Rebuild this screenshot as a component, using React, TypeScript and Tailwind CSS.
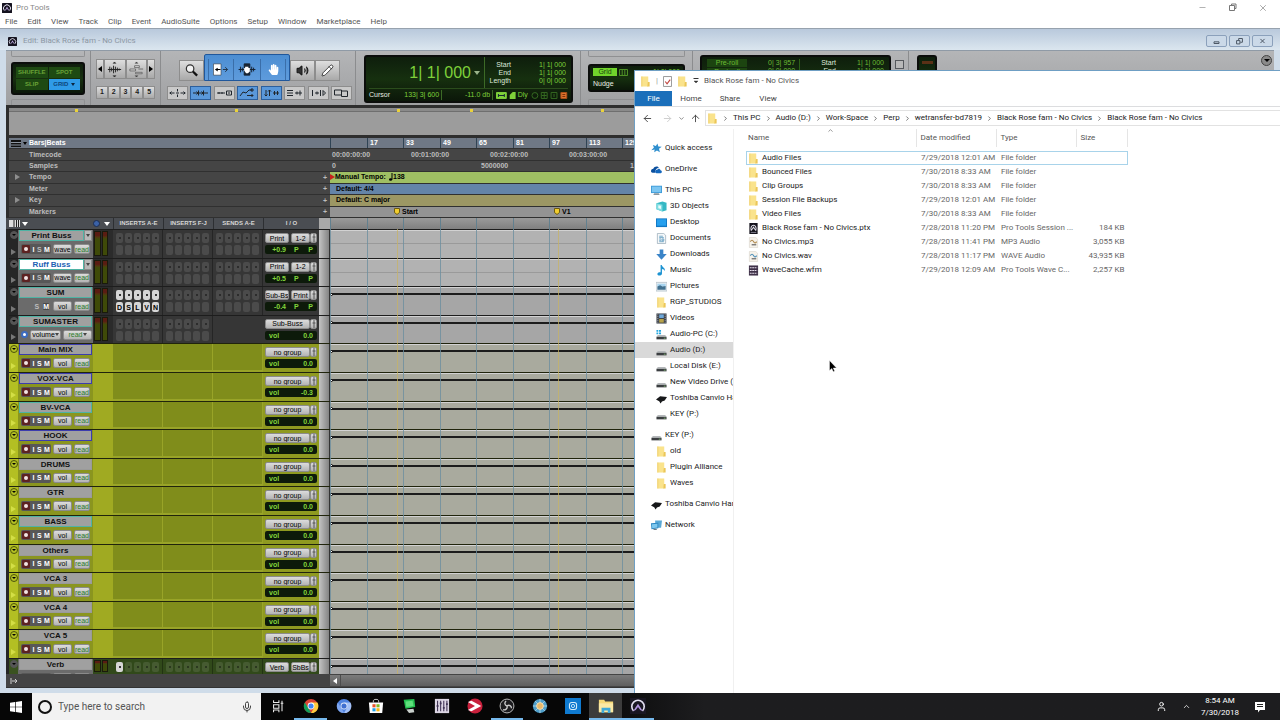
import React from 'react';
import {
  ArrowLeft,
  ArrowRight,
  ArrowUp,
  ChevronDown,
  ChevronRight,
  ChevronUp,
  Mic,
  Minus,
  Pencil,
  User,
  Volume2,
  X,
} from 'lucide-react';
import { FaHandPaper } from 'react-icons/fa';

type TrackKind = 'audio' | 'aux' | 'master' | 'vca' | 'verb';

interface Track {
  name: string;
  kind: TrackKind;
  frame: string;
  view?: string;
  outputs: string[];
  level: string;
  selected?: boolean;
}

const TEAL = 'border-[#4fb3a4]';
const BLUE = 'border-[#3c3cae]';
const GRAY = 'border-[#9a9a9a]';

const tracks: Track[] = [
  { name: 'Print Buss', kind: 'audio', frame: TEAL, view: 'wave', outputs: ['Print', '1-2'], level: '+0.9' },
  { name: 'Ruff Buss', kind: 'audio', frame: TEAL, view: 'wave', outputs: ['Print', '1-2'], level: '+0.5', selected: true },
  { name: 'SUM', kind: 'aux', frame: TEAL, view: 'vol', outputs: ['Sub-Bs', 'Print'], level: '-0.4' },
  { name: 'SUMASTER', kind: 'master', frame: TEAL, view: 'volume', outputs: ['Sub-Buss'], level: '0.0' },
  { name: 'Main MIX', kind: 'vca', frame: BLUE, view: 'vol', outputs: ['no group'], level: '0.0' },
  { name: 'VOX-VCA', kind: 'vca', frame: BLUE, view: 'vol', outputs: ['no group'], level: '-0.3' },
  { name: 'BV-VCA', kind: 'vca', frame: TEAL, view: 'vol', outputs: ['no group'], level: '0.0' },
  { name: 'HOOK', kind: 'vca', frame: BLUE, view: 'vol', outputs: ['no group'], level: '0.0' },
  { name: 'DRUMS', kind: 'vca', frame: GRAY, view: 'vol', outputs: ['no group'], level: '0.0' },
  { name: 'GTR', kind: 'vca', frame: GRAY, view: 'vol', outputs: ['no group'], level: '0.0' },
  { name: 'BASS', kind: 'vca', frame: TEAL, view: 'vol', outputs: ['no group'], level: '0.0' },
  { name: 'Others', kind: 'vca', frame: GRAY, view: 'vol', outputs: ['no group'], level: '0.0' },
  { name: 'VCA 3', kind: 'vca', frame: GRAY, view: 'vol', outputs: ['no group'], level: '0.0' },
  { name: 'VCA 4', kind: 'vca', frame: GRAY, view: 'vol', outputs: ['no group'], level: '0.0' },
  { name: 'VCA 5', kind: 'vca', frame: GRAY, view: 'vol', outputs: ['no group'], level: '0.0' },
  { name: 'Verb', kind: 'verb', frame: GRAY, outputs: ['Verb', 'SbBs'], level: '0.0' },
];

const menus = ['File', 'Edit', 'View', 'Track', 'Clip', 'Event', 'AudioSuite', 'Options', 'Setup', 'Window', 'Marketplace', 'Help'];

const bars = ['', '17', '33', '49', '65', '81', '97', '113', '129'];

const files = [
  { name: 'Audio Files', date: '7/29/2018 12:01 AM', type: 'File folder', size: '', icon: 'folder' },
  { name: 'Bounced Files', date: '7/30/2018 8:33 AM', type: 'File folder', size: '', icon: 'folder' },
  { name: 'Clip Groups', date: '7/30/2018 8:33 AM', type: 'File folder', size: '', icon: 'folder' },
  { name: 'Session File Backups', date: '7/29/2018 12:01 AM', type: 'File folder', size: '', icon: 'folder' },
  { name: 'Video Files', date: '7/30/2018 8:33 AM', type: 'File folder', size: '', icon: 'folder' },
  { name: 'Black Rose fam - No Civics.ptx', date: '7/28/2018 11:20 PM', type: 'Pro Tools Session ...', size: '184 KB', icon: 'ptx' },
  { name: 'No Civics.mp3', date: '7/28/2018 11:41 PM', type: 'MP3 Audio', size: '3,055 KB', icon: 'mp3' },
  { name: 'No Civics.wav', date: '7/28/2018 11:17 PM', type: 'WAVE Audio', size: '43,935 KB', icon: 'wav' },
  { name: 'WaveCache.wfm', date: '7/29/2018 12:09 AM', type: 'Pro Tools Wave C...', size: '2,257 KB', icon: 'wfm' },
];

const places = [
  [{ name: 'Quick access', icon: 'star' }],
  [{ name: 'OneDrive', icon: 'cloud' }],
  [
    { name: 'This PC', icon: 'pc' },
    { name: '3D Objects', icon: 'cube' },
    { name: 'Desktop', icon: 'desktop' },
    { name: 'Documents', icon: 'doc' },
    { name: 'Downloads', icon: 'down' },
    { name: 'Music', icon: 'music' },
    { name: 'Pictures', icon: 'picture' },
    { name: 'RGP_STUDIOS', icon: 'folder' },
    { name: 'Videos', icon: 'video' },
    { name: 'Audio-PC (C:)', icon: 'windrive' },
    { name: 'Audio (D:)', icon: 'drive' },
    { name: 'Local Disk (E:)', icon: 'drive' },
    { name: 'New Video Drive (F:)', icon: 'drive' },
    { name: 'Toshiba Canvio Hard', icon: 'canvio' },
    { name: 'KEY (P:)', icon: 'drive' },
  ],
  [
    { name: 'KEY (P:)', icon: 'drive' },
    { name: 'old', icon: 'folder' },
    { name: 'Plugin Alliance', icon: 'folder' },
    { name: 'Waves', icon: 'folder' },
  ],
  [{ name: 'Toshiba Canvio Hard', icon: 'canvio' }],
  [{ name: 'Network', icon: 'network' }],
];

const crumbs = ['This PC', 'Audio (D:)', 'Work-Space', 'Perp', 'wetransfer-bd7819', 'Black Rose fam - No Civics', 'Black Rose fam - No Civics'];

const FileIcon = ({ name }: { name: string }) => (
  <svg viewBox="0 0 12 12" className="size-[11px] shrink-0">
    {name === 'folder' && (
      <>
        <path d="M1.500.5h7.500v11h-7.500z" fill="#fae38c" />
        <path d="M8.500 6.500h2v5H8z" fill="#ebc658" />
        <path d="M1.500.5h1v11h-1z" fill="#efcf6a" />
      </>
    )}
    {name === 'star' && (
      <path d="M7 .5l1 3.200 3.700.3-3 2.200 1 4L6.500 8.200 3.500 10l.5-3L.3 8l2.900-3.200L2 2.300l3.300 1z" fill="#2f8fce" />
    )}
    {name === 'cloud' && (
      <>
        <path d="M0 8c0-2 1.500-2.700 2.500-2.700C3.500 2.500 7.500 2 8.500 4.300 6 4.500 4.500 6 4.500 9.500H1.700C.7 9.500 0 8.800 0 8z" fill="#0a4f9e" />
        <path d="M4.500 8.500C4.500 6.500 6 6 6.800 6.200 8 4.500 10 5.200 10.300 6.800 12.300 7 12.300 10 10.500 10H6c-1 0-1.500-.7-1.500-1.500z" fill="#1467bd" />
      </>
    )}
    {name === 'pc' && (
      <>
        <path d="M0 .8h12v8H0z" fill="#3f9bd8" />
        <path d="M1 1.800h10v6H1z" fill="#7cc6f2" />
        <path d="M3.500 9h5l1 2H2.500z" fill="#8a979f" />
      </>
    )}
    {name === 'cube' && (
      <>
        <path d="M.5 2.500L7 .5l4.500 1.500v8L7 11.500.5 9z" fill="#35b8c4" />
        <path d="M.5 2.500L7 4v7.500L.5 9z" fill="#7fdde2" />
        <path d="M2.500 4.500l3 .7v3.500l-3-.7z" fill="#e8fbfb" />
      </>
    )}
    {name === 'desktop' && (
      <>
        <path d="M0 1.500h12v9.500H0z" fill="#1278c4" />
        <path d="M1 2.500h10v7H1z" fill="#27a0ee" />
      </>
    )}
    {name === 'doc' && (
      <>
        <path d="M1.500.5h7l2 2v9h-9z" fill="#f5f8fa" stroke="#8aa0ae" strokeWidth=".7" />
        <path d="M3.500 3.500h4M3.500 5h5M3.500 6.500h2M6.500 6.500h2v2h-2zM3.500 8h2M3.500 9.500h5" stroke="#4d90b8" strokeWidth=".8" fill="none" />
      </>
    )}
    {name === 'down' && <path d="M4 .5h4v5h3.700L6 11.800.3 5.500H4z" fill="#3a84c8" />}
    {name === 'music' && (
      <path d="M5 0h1.300c.4 2.500 4 3 3.300 6.500-.6-1.500-1.700-2-3.100-2.200v5.200C6.500 12 1.500 12.300 1.500 9.700 1.500 8 4 7.600 5 8z" fill="#1c93d2" />
    )}
    {name === 'picture' && (
      <>
        <path d="M0 1.500h12v9.500H0z" fill="#e8eef2" stroke="#9aaab4" strokeWidth=".6" />
        <path d="M1.500 3h9v3h-9z" fill="#a8d4ef" />
        <path d="M1.500 6l3-1.500L7 6l3.500-.5v4h-9z" fill="#41708f" />
      </>
    )}
    {name === 'video' && (
      <>
        <path d="M.5.5h11v11H.5z" fill="#3a3f48" />
        <path d="M3.500 1.500h5v4h-5z" fill="#6ea7d8" />
        <path d="M3.500 6.500h5v4h-5z" fill="#b7a24a" />
        <path d="M2 1.500v9M10 1.500v9" stroke="#cfd4da" strokeWidth=".8" strokeDasharray="1 1" />
      </>
    )}
    {(name === 'drive' || name === 'windrive') && (
      <>
        <path d="M2 6.500h8l1.500 2H.5z" fill="#b5b8bb" />
        <path d="M.5 8.500h11v2.800H.5z" fill="#3b3e41" />
        <path d="M8.500 10h2" stroke="#8fd07c" strokeWidth=".8" />
      </>
    )}
    {name === 'windrive' && <path d="M.5 1h2v2h-2zM3.300 1h2.200v2H3.300zM.5 3.700h2v2h-2zM3.300 3.700h2.200v2H3.300z" fill="#22a7e0" />}
    {name === 'canvio' && <path d="M0 7l4.500-3.500 7.500.8-2.500 4-3 1L5 11.500 3.500 9z" fill="#17181a" />}
    {name === 'network' && (
      <>
        <path d="M4.500.5H12l-1 8H5z" fill="#5aa9d6" />
        <path d="M0 3.500l8-.5v6l-7.500 1z" fill="#2a86c2" />
        <path d="M1 4.500l6-.4v4l-5.700.8z" fill="#7ec8ee" />
        <path d="M3 9.500h3l.5 1.500h-4z" fill="#6c7d88" />
      </>
    )}
    {name === 'ptx' && (
      <>
        <path d="M1.500 0h9v12h-9z" fill="#14131c" />
        <path d="M3.500 8C2.500 5 4 2.500 6 2.500S9.500 5 8.500 8L7.300 6.500 6 4.500 4.700 6.500z" fill="none" stroke="#e6e4ee" strokeWidth="1.100" />
        <path d="M3 10.300h6" stroke="#8d8a9c" strokeWidth=".9" />
      </>
    )}
    {(name === 'mp3' || name === 'wav') && (
      <>
        <path d="M1.500.5h7l2 2v9h-9z" fill="#f6f2ea" stroke="#cfc9bd" strokeWidth=".5" />
        <path d="M2.500 5q2-3 3.500 0t3.500 0" stroke={name === 'mp3' ? '#b08a50' : '#4f8fb8'} strokeWidth="1.200" fill="none" />
        <path d="M4 8.500h5" stroke="#5c5c5c" strokeWidth="1.200" />
      </>
    )}
    {name === 'wfm' && (
      <>
        <path d="M1 .5h10v11H1z" fill="#3f3148" />
        <path d="M2 3h8M2 6h8M2 9h8" stroke="#e6dfec" strokeWidth="1.300" strokeDasharray="2 .6" />
      </>
    )}
  </svg>
);

const AvidIcon = ({ className }: { className: string }) => (
  <svg viewBox="0 0 20 20" className={className}>
    <rect width="20" height="20" rx="1" fill="#15131f" />
    <path d="M4.500 15A7 7 0 1 1 15.500 15" fill="none" stroke="#e9e6f4" strokeWidth="2" />
    <path d="M5 16L10 7l5 9-3-2-2-3-2 3z" fill="#b9a4dc" />
  </svg>
);

const WindowButtons = () => (
  <div className="flex items-center gap-[21px] pr-3 text-[#777]">
    <button aria-label="Minimize"><Minus className="size-[9px]" strokeWidth={1.500} /></button>
    <button aria-label="Restore">
      <svg viewBox="0 0 9 9" className="size-[9px]" fill="none" stroke="currentColor">
        <path d="M1.500 2.500h5v5h-5zM3.500 2.500v-1.500h4.500v4.500h-1.500" />
      </svg>
    </button>
    <button aria-label="Close"><X className="size-[10px]" strokeWidth={1.500} /></button>
  </div>
);

const EditTitleBar = () => (
  <div className="flex h-[21px] shrink-0 items-center bg-linear-to-b from-[#b9c9dc] to-[#dbe6ef] pt-[3px] pr-1 pl-2 font-['Roboto',sans-serif]">
    <AvidIcon className="size-[9px]" />
    <span className="ml-[6px] flex-1 text-[8px] leading-[12px] text-[#8c97a3]">Edit: Black Rose fam - No Civics</span>
    <div className="flex gap-[2px] pr-[3px]">
      {['M7 7h6v2H7z', 'M6.500 5.500h4v4h-4zM9 5V3h4.500v4.500H11', 'M7.500 3.500l5 5M12.500 3.500l-5 5'].map((d, i) => (
        <button key={d} aria-label={['Minimize', 'Restore', 'Close'][i]} className="rounded-[2px] border border-[#8ba0bb] bg-[#cbd9e8]">
          <svg viewBox="0 0 20 12" className="h-[10px] w-[19px]" fill="none" stroke="#4d5866" strokeWidth="1.200"><path d={d} /></svg>
        </button>
      ))}
    </div>
  </div>
);

const lcd = 'rounded-[3px] border-2 border-[#0b0d0b] bg-linear-to-b from-[#0e1e0c] via-[#16300f] to-[#0b1709]';
const keycap = 'flex items-center justify-center border border-[#8d8d8d] bg-linear-to-b from-[#dedede] to-[#a9a9a9] text-[#1b1b1b]';

const EditModes = () => (
  <div className="flex w-[85px] flex-col justify-between border-r border-[#8b8c8e] px-[5px]">
    <div className="h-[6px] rounded-b-[2px] border border-t-0 border-[#8f9092]" />
    <div className={`grid grid-cols-2 gap-px p-[3px] text-[6px] font-bold text-[#6aa338] ${lcd}`}>
      <button className="h-[11px] bg-[#1e4a12]">SHUFFLE</button>
      <button className="h-[11px] bg-[#1e4a12]">SPOT</button>
      <button className="h-[11px] bg-[#1e4a12]">SLIP</button>
      <button className="flex h-[11px] items-center justify-center gap-[3px] bg-[#2f9be8] text-[#0d4479]">GRID <i className="border-x-2 border-t-[3px] border-x-transparent border-t-[#0b2540]" /></button>
    </div>
    <div className="h-[6px] rounded-t-[2px] border border-b-0 border-[#8f9092]" />
  </div>
);

const ZoomControls = () => (
  <div className="flex w-[70px] flex-col gap-[7px] border-r border-[#8b8c8e] pt-2 pr-[5px] pl-[5px]">
    <div className="flex h-[20px]">
      <button aria-label="Zoom out" className={`w-2 ${keycap}`}><i className="border-y-[3px] border-r-4 border-y-transparent border-r-black" /></button>
      <button aria-label="Zoom audio" className={`flex-1 ${keycap}`}>
        <svg viewBox="0 0 18 18" className="size-[17px]" stroke="#222" strokeWidth="1">
          <path d="M2 9h14M4 6v6M6 7v4M8 5v8M10 6v6M12 7v4M14 8v2" /><path d="M7.500 2.500L9 1l1.500 1.500zM7.500 15.500L9 17l1.500-1.500z" fill="#222" strokeWidth=".5" />
        </svg>
      </button>
      <button aria-label="Zoom MIDI" className={`flex-1 ${keycap}`}>
        <svg viewBox="0 0 18 18" className="size-[17px]" stroke="#555" strokeWidth=".8">
          <path d="M2 8.500h6v2H2zM7 5h5v2H7zM8 12h7v1.500H8zM11 8.500h5" fill="#ddd" /><path d="M7.500 2.500L9 1l1.500 1.500zM7.500 15.500L9 17l1.500-1.500z" fill="#222" strokeWidth=".5" />
        </svg>
      </button>
      <button aria-label="Zoom in" className={`w-2 ${keycap}`}><i className="border-y-[3px] border-l-4 border-y-transparent border-l-black" /></button>
    </div>
    <div className="flex h-[13px]">
      {['1', '2', '3', '4', '5'].map((n) => (
        <button key={n} className={`flex-1 text-[7px] font-bold ${keycap}`}>{n}</button>
      ))}
    </div>
  </div>
);

const smallTools = [
  { on: false, d: 'M1.500 6h5M12.500 6h5M3.500 4.500L2 6l1.500 1.500M15.500 4.500L17 6l-1.500 1.500M9.500 2v2.500M9.500 7.500V10M8 6h3' },
  { on: true, d: 'M2 6h15M7.500 3.500v5M12.500 3.500v5M5.500 4.500L7 6 5.500 7.500M10.500 4.500L12 6l-1.500 1.500' },
  { on: false, d: 'M2 6h8M4 5v2M7 5v2M11.500 4h5v4h-5zM13 6h2' },
  { on: true, d: 'M2 9l3-4 3 1 3-3h3M9 8.500h6M13.500 7L15 8.500 13.500 10M13 2h2v2h-2z' },
  { on: true, d: 'M4 3v6M2.500 7.500L4 9l1.500-1.500M7.500 9V3M6 4.500L7.500 3 9 4.500M11 6h6M12.500 4v4M15.500 4v4' },
  { on: false, d: 'M2 3.500h6M2 6h6M2 8.500h6M10 6h7M12 4.500v3M15 3.500v5' },
  { on: false, d: 'M3.500 3v6M6 6h4M8 4.500v3M11.500 3v6M14 3.500L16.500 6 14 8.500z' },
  { on: false, d: 'M2.500 3h7v5h-7zM9.500 4h6v5.500h-6z' },
];

const EditTools = () => (
  <div className="flex w-[195px] flex-col justify-between border-r border-[#8b8c8e] pt-[3px] pr-[3px] pb-[5px] pl-[6px]">
    <div className="flex h-[27px] items-end pl-3">
      <button aria-label="Zoomer" className={`h-[21px] w-[25px] ${keycap}`}>
        <svg viewBox="0 0 16 16" className="size-[15px]"><circle cx="6.500" cy="6" r="4" fill="#f2f2f2" stroke="#333" strokeWidth="1.300" /><path d="M9.500 9l4.500 4.500" stroke="#111" strokeWidth="2.400" /></svg>
      </button>
      <div className="flex h-[27px] items-end rounded-t-[2px] border border-[#20579b] bg-linear-to-b from-[#4c8ed2] to-[#5e9bdc] px-[3px]">
        <button aria-label="Trim" className="flex h-[21px] w-[26px] items-center justify-center border-x border-[#3a6ea9]">
          <svg viewBox="0 0 20 16" className="h-[15px] w-[20px]"><path d="M2 2h8v12H2z" fill="#fff" stroke="#333" strokeWidth=".6" /><path d="M3.500 8l3-2v4zM6.500 7.500h3v1h-3z" fill="#000" /><path d="M12 8h5M14.500 5.500L17 8l-2.500 2.500" stroke="#234" fill="none" /></svg>
        </button>
        <button aria-label="Selector" className="flex h-[21px] w-[26px] items-center justify-center">
          <svg viewBox="0 0 20 16" className="h-[15px] w-[20px]" stroke="#14202e"><path d="M1 8h18M3 5v6M5 6v4M15 5v6M17 6v4" /><path d="M7 2h6v12H7z" fill="#1b2633" /><path d="M7 9V6.500h1V5h3.500v1.500H13V10l-2 2H9z" fill="#fff" stroke="none" /></svg>
        </button>
        <button aria-label="Grabber" className="flex h-[21px] w-[26px] items-center justify-center border-x border-[#3a6ea9]"><FaHandPaper className="size-[11px] text-white" /></button>
      </div>
      <button aria-label="Scrubber" className={`h-[21px] w-[25px] ${keycap}`}><Volume2 className="size-[13px] fill-[#333]" /></button>
      <button aria-label="Pencil" className={`h-[21px] w-[25px] ${keycap}`}><Pencil className="size-[13px] fill-white" strokeWidth={1.500} /></button>
    </div>
    <div className="flex justify-between">
      {smallTools.map((t) => (
        <button
          key={t.d}
          aria-label="Edit option"
          className={`flex h-[14px] w-[21px] items-center justify-center border ${t.on ? 'border-[#2c5f9c] bg-[#5a98da]' : 'border-[#8d8d8d] bg-[#c9c9c9]'}`}
        >
          <svg viewBox="0 0 19 12" className="h-3 w-[19px]" fill="none" stroke="#20262c"><path d={t.d} /></svg>
        </button>
      ))}
    </div>
  </div>
);

const Counter = () => (
  <div className="w-[225px] border-r border-[#8b8c8e] pt-1 pr-[7px] pl-2">
    <div className={`flex h-[48px] flex-col px-[3px] text-[#7fd13a] ${lcd}`}>
      <div className="flex flex-1 items-center border-b border-[#2b4d1c]">
        <div className="flex h-full w-[116px] items-center justify-end gap-[3px] border-r border-[#3c6a26] pr-1">
          <span className="text-[16px] leading-4">1| 1| 000</span>
          <i className="border-x-[3px] border-t-4 border-x-transparent border-t-[#9ab48a]" />
        </div>
        <div className="flex flex-1 justify-between pr-[2px] pl-[2px] text-[7px] leading-[8px]">
          <div className="w-[24px] text-right text-[#dfe8da]">
            <div>Start</div>
            <div>End</div>
            <div>Length</div>
          </div>
          <div className="text-right">
            <div>1| 1| 000</div>
            <div>1| 1| 000</div>
            <div>0| 0| 000</div>
          </div>
        </div>
      </div>
      <div className="flex h-[12px] items-center text-[7px] whitespace-nowrap">
        <span className="w-[36px] text-[#e8efe4]">Cursor</span>
        <span className="w-[38px] border-r border-[#3c6a26] pr-[2px] text-right">133| 3| 600</span>
        <span className="w-[52px] border-r border-[#3c6a26] pr-[2px] text-right">-11.0 db</span>
        <svg viewBox="0 0 22 9" className="ml-[3px] h-[9px] w-[22px]" fill="none" stroke="#7fd13a">
          <path d="M.5 1.500h10v6H.5z" fill="#7fd13a" /><path d="M2.500 4.500h6M2.500 3v3M8.500 3v3" stroke="#123" />
          <path d="M14 4l3-3h3v7h-6z" fill="#7fd13a" stroke="none" />
        </svg>
        <span>Dly</span>
        <svg viewBox="0 0 38 9" className="ml-[3px] h-[9px] w-[38px]" fill="none" stroke="#356b22">
          <circle cx="4" cy="4.500" r="3" />
          <path d="M10.500 1.500h6v6h-6zM20.500 1.500h6v6h-6zM11 4.500h5M13.500 2v5M23.500 3v3" />
          <path d="M30.500 1.500h6v6h-6z" fill="#e0762e" stroke="#a8501a" />
          <path d="M32 3.500h3M32 5.500h3" stroke="#7a2f0a" />
        </svg>
      </div>
    </div>
  </div>
);

const Toolbar = () => (
  <div className="flex h-[55px] shrink-0 border-t border-[#8f9aa6] bg-linear-to-b from-[#b4b5b7] to-[#9fa0a2]">
    <EditModes />
    <ZoomControls />
    <EditTools />
    <Counter />
    <div className="flex w-[112px] flex-col justify-between border-r border-[#8b8c8e] px-[7px]">
      <div className="h-[6px] rounded-b-[2px] border border-t-0 border-[#8f9092]" />
      <div className={`flex flex-col gap-[4px] px-[3px] py-[2px] text-[7px] leading-[8px] text-[#7fd13a] ${lcd}`}>
        <div className="flex items-center gap-[2px]">
          <button className="w-[24px] bg-[#71d52b] text-[#17430b]">Grid</button>
          <svg viewBox="0 0 10 8" className="h-[7px] w-[9px]" fill="none" stroke="#5aa32c"><path d="M.5.5h9v7h-9zM3.500 1v6M6.500 1v6" /></svg>
          <span className="ml-auto">1| 0| 000</span>
        </div>
        <div className="flex text-[#e8efe4]">Nudge</div>
      </div>
      <div className="h-[6px] rounded-t-[2px] border border-b-0 border-[#8f9092]" />
    </div>
    <div className="flex w-[216px] items-start gap-1 border-r border-[#8b8c8e] pt-1 pl-[7px]">
      <div className={`flex h-[48px] flex-1 justify-between px-[5px] pt-[2px] text-[7px] leading-[8px] text-[#6dbb34] ${lcd}`}>
        <div className="w-[40px] text-center">
          <div className="bg-[#1c4410]">Pre-roll</div>
          <div className="mt-px bg-[#1c4410]">Post-roll</div>
        </div>
        <div className="border-r border-[#2d6018] pr-1"><div>0| 3| 957</div><div>0| 0| 000</div></div>
        <div className="text-right text-[#dfe8da]"><div>Start</div><div>End</div></div>
        <div><div>1| 1| 000</div><div>1| 1| 000</div></div>
      </div>
      <button aria-label="Link" className="mt-[5px] mr-1 size-[9px] border border-[#55585c] bg-[#b8b8b8]" />
    </div>
    <div className="pt-1 pl-2">
      <div className={`flex h-[44px] w-[20px] justify-center pt-1 ${lcd}`}><div className="h-[3px] w-[11px] bg-[#5a3016]" /></div>
    </div>
    <button aria-label="Toolbar menu" className="mt-1 mr-[2px] ml-auto flex size-[11px] items-center justify-center rounded-full border border-[#444] bg-[#8a8a8a]">
      <i className="border-x-[3px] border-t-[3px] border-x-transparent border-t-black" />
    </button>
  </div>
);

// bar cells alternate between 37 and 36 px so that sixteen bars stay 36.5 px apart
const cellWidth = (i: number) => (i % 2 ? 'w-9' : 'w-[37px]');

const Overview = () => (
  <div className="h-[33px] shrink-0 bg-[#2e2e2e] py-[3px] pl-[3px]">
    <div className="relative h-full rounded-tl-[2px] bg-[#9c9c9c]">
      <div className="h-[4px] border-b border-[#6f6f6f] bg-[#8a8a8a]" />
      {[67, 227, 389, 462, 593].map((x) => (
        <i key={x} className="absolute top-px size-[3px] bg-[#ead23a]" style={{ left: x - 1 }} />
      ))}
    </div>
  </div>
);

const MarkerFlag = ({ label }: { label: string }) => (
  <span className="flex items-center gap-[2px]">
    <svg viewBox="0 0 6 7" className="h-[7px] w-[6px]"><path d="M.5.5h5v4L3 6.500.5 4.500z" fill="#f2cd2e" stroke="#6d5c12" /></svg>
    {label}
  </span>
);

const Rulers = () => {
  const rows = [
    { name: 'Bars|Beats', tone: 'bg-[#6f7885] text-white', arrow: false, plus: false },
    { name: 'Timecode', tone: 'bg-[#454545] text-[#bdbdbd]', arrow: false, plus: false },
    { name: 'Samples', tone: 'bg-[#454545] text-[#bdbdbd]', arrow: false, plus: false },
    { name: 'Tempo', tone: 'bg-[#9fbf63] text-black', arrow: true, plus: true },
    { name: 'Meter', tone: 'bg-[#6484a8] text-black', arrow: false, plus: true },
    { name: 'Key', tone: 'bg-[#9c9764] text-black', arrow: true, plus: true },
    { name: 'Markers', tone: 'bg-[#939393] text-black', arrow: false, plus: true },
  ];
  return (
    <div className="grid h-[80px] shrink-0 grid-rows-7 bg-[#2e2e2e] pl-[3px] text-[7px] leading-[10px] font-bold">
      {rows.map((row, i) => (
        <div key={row.name} className="flex min-h-0 items-stretch overflow-hidden border-b border-[#303030]">
          <div className={`flex w-[321px] shrink-0 items-center pr-[3px] ${i === 0 ? 'bg-[#6f7885] text-white' : 'bg-[#454545] text-[#bdbdbd]'}`}>
            <span className="flex w-[20px] items-center gap-[2px] pl-[2px]">
              {i === 0 && (
                <>
                  <svg viewBox="0 0 10 7" className="h-[7px] w-[10px]"><path d="M0 0h10v7H0z" fill="#111" /><path d="M0 2.500h10M0 5h10" stroke="#8c95a1" /></svg>
                  <i className="border-x-2 border-t-[3px] border-x-transparent border-t-black" />
                </>
              )}
              {row.arrow && <i className="ml-1 border-y-[3px] border-l-[5px] border-y-transparent border-l-[#8e8e8e]" />}
            </span>
            <span className="flex-1">{row.name}</span>
            {row.plus && <button aria-label={`Add ${row.name}`} className="leading-none">+</button>}
          </div>
          <div className={`flex flex-1 items-center overflow-hidden whitespace-nowrap ${row.tone}`}>
            {i === 0 && bars.map((b, n) => (
              <span key={n} className={`h-full shrink-0 border-l border-[#2f4354] pl-[2px] ${cellWidth(n)}`}>{b}</span>
            ))}
            {i === 1 && ['00:00:00:00', '00:01:00:00', '00:02:00:00', '00:03:00:00'].map((t) => (
              <span key={t} className="w-[79px] shrink-0 pl-[2px]">{t}</span>
            ))}
            {i === 2 && (
              <>
                <span className="w-[151px] shrink-0 pl-[2px]">0</span>
                <span className="w-[149px] shrink-0">5000000</span>
                <span>10000000</span>
              </>
            )}
            {i === 3 && (
              <>
                <i className="border-y-[3px] border-l-[5px] border-y-transparent border-l-[#c8231c]" />
                <span className="w-[54px]">Manual Tempo:</span>
                <svg viewBox="0 0 4 8" className="h-2 w-1"><ellipse cx="1.600" cy="6.500" rx="1.600" ry="1.300" /><path d="M2.500 0h1v6.500h-1z" /></svg>
                <span>138</span>
              </>
            )}
            {i === 4 && <span className="pl-[6px]">Default: 4/4</span>}
            {i === 5 && <span className="pl-[6px]">Default: C major</span>}
            {i === 6 && (
              <>
                <span className="w-[161px] shrink-0 pl-[64px]"><MarkerFlag label="Start" /></span>
                <span className="pl-[63px]"><MarkerFlag label="V1" /></span>
              </>
            )}
          </div>
        </div>
      ))}
    </div>
  );
};

const Slots = ({ letters, tone, lit = 0, dim }: { letters?: string; tone: string; lit?: number; dim?: boolean }) => (
  <div className={`grid w-[50px] shrink-0 grid-cols-5 content-start gap-x-[2px] gap-y-[2px] border-r border-black/30 px-[3px] pt-[3px] ${tone}`}>
    {Array.from({ length: 10 }, (_, i) => {
      const on = i % 5 < lit;
      return (
        <span
          key={i}
          className={`flex h-[10px] items-center justify-center rounded-[2px] text-[7px] leading-none font-bold ${on ? 'bg-[#d6d6d6] text-black' : dim ? 'bg-white/10 text-black/50' : 'bg-[#4b4b4b] text-[#222]'}`}
        >
          {i < 5 ? <i className="size-[2px] rounded-full bg-current" /> : on && letters ? letters[i - 5] : ''}
        </span>
      );
    })}
  </div>
);

const btn = 'flex h-[10px] items-center justify-center rounded-[2px] border border-[#8b8b8b] bg-linear-to-b from-[#dcdcdc] to-[#b4b4b4] text-[7px] leading-none text-black';

const TrackRow = ({ track }: { track: Track }) => {
  const vca = track.kind === 'vca';
  const verb = track.kind === 'verb';
  const aux = track.kind === 'aux';
  const cell = vca ? 'bg-[#808d1b]' : verb ? 'bg-[#31491a]' : 'bg-[#363636]';
  const strip = vca ? 'bg-[#b3bf23]' : verb ? 'bg-[#3a5220]' : 'bg-[#262626]';
  const hasLine = track.kind !== 'audio';

  return (
    <div className={`flex min-h-0 overflow-hidden border-t ${vca ? 'border-[#20240c]' : 'border-[#1d1d1d]'}`}>
      <div className={`flex w-[9px] shrink-0 flex-col items-center justify-between pt-px pb-[3px] ${strip}`}>
        <span className={`flex size-[8px] items-center justify-center rounded-full border ${vca ? 'border-[#4b520c]' : 'border-[#555] bg-[#555]'}`}>
          <i className="border-x-2 border-t-2 border-x-transparent border-t-black" />
        </span>
        {!verb && <i className={`border-y-[3px] border-l-[5px] border-y-transparent ${vca ? 'border-l-[#d3de45]' : 'border-l-[#777]'}`} />}
      </div>
      <div className={`flex w-[75px] shrink-0 flex-col gap-[3px] pr-px pl-px ${vca ? 'bg-[#8a951f]' : 'bg-[#6b6b6b]'}`}>
        <div className="flex">
          <button
            className={`h-[11px] flex-1 border text-[8px] leading-[9px] font-bold ${track.frame} ${track.selected ? 'bg-white text-[#2261b4]' : 'bg-[#a0a0a0] text-[#111]'}`}
          >
            {track.name}
          </button>
          {track.kind === 'audio' && (
            <button aria-label="Playlist" className="flex w-[8px] items-center justify-center border border-[#8b8b8b] bg-[#b8b8b8]">
              <i className="border-x-2 border-t-[3px] border-x-transparent border-t-[#444]" />
            </button>
          )}
        </div>
        <div className="flex items-center gap-[2px] pl-[2px]">
          {track.kind === 'master' && (
            <>
              <span className="size-[7px] rounded-full border-2 border-[#3d6cc0] bg-white" />
              <button className={`w-[31px] justify-between px-px ${btn}`}><span>volume</span><i className="border-x-2 border-t-[3px] border-x-transparent border-t-[#444]" /></button>
              <button className={`flex-1 justify-around ${btn}`}><span className="text-[#2c7d2c]">read</span><i className="border-x-2 border-t-[3px] border-x-transparent border-t-[#444]" /></button>
            </>
          )}
          {verb && (
            <>
              <i className="h-[10px] w-[30px] rounded-[2px] bg-[#575757]" />
              <i className={`w-[19px] ${btn}`} />
              <i className={`w-4 ${btn}`} />
            </>
          )}
          {!verb && track.kind !== 'master' && (
            <>
              <div className={`flex h-[10px] w-[30px] items-center rounded-[2px] text-[7px] leading-none font-bold text-white ${aux ? 'justify-end gap-1 pr-[2px]' : 'justify-around bg-[#575757]'}`}>
                {!aux && (
                  <>
                    <i className="flex size-[8px] items-center justify-center rounded-[1px] bg-[#5d2222]"><i className="size-1 rounded-full bg-[#f1e4e4]" /></i>
                    <button>I</button>
                  </>
                )}
                <button className={vca ? '' : 'text-[#bdbdbd]'}>S</button>
                <button className={aux ? 'rounded-[1px] bg-[#4a4a4a]' : ''}>M</button>
              </div>
              <button className={`w-[19px] ${btn}`}>{track.view}</button>
              <button className={`w-4 ${btn}`}><span className="text-[#2c7d2c]">read</span></button>
            </>
          )}
        </div>
      </div>
      <div className={`flex w-[20px] shrink-0 gap-px pt-px pr-[5px] pb-[2px] pl-px ${vca ? 'bg-[#a0aa22]' : verb ? 'bg-[#31491a]' : 'bg-[#2b2b2b]'}`}>
        {!vca && [0, 1].map((n) => (
          <i key={n} className="flex-1 border border-[#1a1a0c] bg-linear-to-b from-[#5a1c12] from-15% to-[#3f4a08] to-30%" />
        ))}
      </div>
      {vca
        ? [0, 1, 2].map((n) => <div key={n} className={`w-[50px] shrink-0 border-r border-b-2 border-[#99a428] ${cell}`} />)
        : (
          <>
            <Slots tone={cell} letters="DSLVN" lit={aux ? 5 : verb ? 1 : 0} dim={verb} />
            <Slots tone={cell} dim={verb} />
            {track.kind === 'master' ? <div className={`w-[50px] shrink-0 ${cell}`} /> : <Slots tone={cell} dim={verb} />}
          </>
        )}
      <div className={`flex w-[56px] shrink-0 flex-col gap-[2px] px-[2px] pt-[3px] ${vca ? 'bg-[#8f9a20]' : cell}`}>
        <div className="flex">
          {track.outputs.map((o, n) => (
            <button key={n} className={`overflow-hidden whitespace-nowrap ${n ? 'ml-[2px] flex-1' : track.outputs.length === 2 ? 'w-[24px]' : 'flex-1'} ${btn}`}>{o}</button>
          ))}
          <button aria-label="Output window" className={`w-[7px] ${btn}`}>
            <svg viewBox="0 0 4 8" className="h-2 w-1" stroke="#555" fill="none"><path d="M2 0v8M.5 3h3" /></svg>
          </button>
        </div>
        {!verb && (
          <div className="flex h-[9px] items-center rounded-[2px] bg-[#0d1a0a] px-1 text-[7px] leading-none font-bold text-[#83d63c]">
            {track.outputs.length === 2 ? (
              <>
                <span className="w-[17px] text-right">{track.level}</span>
                <span className="ml-2 flex-1">P</span>
                <span>P</span>
              </>
            ) : (
              <>
                <span className="flex-1">vol</span>
                <span>{track.level}</span>
              </>
            )}
          </div>
        )}
      </div>
      <div className="w-[11px] shrink-0 border-r border-[#333] bg-linear-to-r from-[#c4c4c4] to-[#848484]" />
      <div className={`min-w-0 flex-1 border-t border-[#d2d2d2] ${vca ? 'bg-[#a9aa9e]' : hasLine ? 'bg-[#a6a6a6]' : 'bg-[#b2b2b2]'}`}>
        {hasLine
          ? <div className="mt-[5px] flex h-[2px] items-center bg-[#1c1c1c]"><i className="size-[3px] rounded-full border border-black bg-white" /></div>
          : <div className="mt-3 border-t border-[#9a9a9a]" />}
      </div>
    </div>
  );
};

const TrackArea = () => (
  <>
    <div className="flex h-[11px] shrink-0 bg-[#4a4d52] pl-[3px] text-[6px] leading-[11px] font-bold text-[#d6d6d6]">
      <div className="flex w-[104px] shrink-0 items-center gap-[2px] pr-[3px]">
        <svg viewBox="0 0 11 7" className="h-[7px] w-[11px]"><path d="M0 0h11v7H0z" fill="#ddd" /><path d="M5 0v7M7.500 0v7M9.500 0v7" stroke="#222" /></svg>
        <i className="border-x-[3px] border-t-4 border-x-transparent border-t-white" />
        <i className="ml-auto size-[7px] rounded-full border border-[#1c2d52] bg-[#3b62a8]" />
        <i className="ml-[2px] border-x-[3px] border-t-4 border-x-transparent border-t-white" />
      </div>
      {['INSERTS A-E', 'INSERTS F-J', 'SENDS A-E'].map((h) => (
        <span key={h} className="w-[50px] shrink-0 border-l border-[#2d2f32] text-center whitespace-nowrap">{h}</span>
      ))}
      <span className="w-[56px] shrink-0 border-l border-[#2d2f32] text-center">I / O</span>
      <div className="w-[11px] shrink-0 bg-[#a9a9a9]" />
      <div className="flex flex-1 overflow-hidden bg-linear-to-b from-[#9a9a9a] to-[#808080]">
        {bars.map((b, n) => <i key={n} className={`shrink-0 border-l border-[#62808f] ${cellWidth(n)}`} />)}
      </div>
    </div>
    <div className="relative min-h-0 flex-1 overflow-hidden bg-[#262626] pl-[3px]">
      <div className="grid h-full grid-rows-[repeat(15,minmax(0,1fr))_16px]">
        {tracks.map((t) => <TrackRow key={t.name} track={t} />)}
      </div>
      {/* bar lines and marker lines lie over every lane */}
      <div className="pointer-events-none absolute inset-y-0 right-0 left-[324px] flex overflow-hidden">
        {bars.map((b, n) => <i key={n} className={`shrink-0 border-l border-[#6d8f9f]/80 ${cellWidth(n)}`} />)}
        <i className="absolute inset-y-0 left-[67px] w-px bg-[#c9b463]/70" />
        <i className="absolute inset-y-0 left-[228px] w-px bg-[#c9b463]/70" />
      </div>
    </div>
    <div className="flex h-[13px] shrink-0 items-center bg-[#444] pl-1">
      <svg viewBox="0 0 8 8" className="h-2 w-[320px] shrink-0" preserveAspectRatio="xMinYMid" fill="none" stroke="#d0d0d0"><path d="M1 1v6M2 4h5M5 2l2 2-2 2" /></svg>
      <div className="flex h-[11px] flex-1 bg-linear-to-b from-[#7b7b7b] to-[#5f5f5f]">
        <button aria-label="Scroll left" className="flex w-[11px] items-center justify-center border-r border-[#4d4d4d]"><i className="border-y-[3px] border-r-4 border-y-transparent border-r-white" /></button>
      </div>
    </div>
  </>
);

const Explorer = () => (
  <section className="absolute top-[41px] right-0 bottom-0 left-[634px] flex flex-col overflow-hidden border-t border-l border-[#6f9fc4] bg-white font-['Roboto',sans-serif] text-[8px] leading-[14px] text-[#444]">
    <div className="flex h-5 shrink-0 items-center gap-[5px] pl-[5px]">
      <FileIcon name="folder" />
      <span className="text-[#999]">|</span>
      <svg viewBox="0 0 10 12" className="h-[11px] w-[9px]" fill="none"><path d="M.5.500h9v11h-9z" stroke="#8d8d8d" /><path d="M2.500 6l2 2.500L8 4" stroke="#c0453f" strokeWidth="1.300" /></svg>
      <FileIcon name="folder" />
      <svg viewBox="0 0 6 6" className="size-[6px]" stroke="#333" fill="#333"><path d="M.5.5h5" /><path d="M1 3h4L3 5z" strokeWidth=".4" /></svg>
      <span className="text-[#555]">Black Rose fam - No Civics</span>
    </div>
    <div className="flex h-[16px] shrink-0 items-center border-b border-[#dcdddf]">
      <button className="h-full w-[37px] bg-[#1b6fba] text-white">File</button>
      <button className="w-[38px]">Home</button>
      <button className="w-[40px]">Share</button>
      <button className="w-[36px]">View</button>
    </div>
    <div className="flex h-[22px] shrink-0 items-center pl-[7px]">
      <button aria-label="Back"><ArrowLeft className="size-[11px]" /></button>
      <button aria-label="Forward" className="ml-[9px] text-[#ccc]"><ArrowRight className="size-[11px]" /></button>
      <button aria-label="Recent" className="ml-[5px]"><ChevronDown className="size-[7px]" /></button>
      <button aria-label="Up" className="ml-[5px]"><ArrowUp className="size-[11px]" /></button>
      <nav className="ml-1 flex h-4 flex-1 items-center border border-r-0 border-[#e2e2e2] pl-px whitespace-nowrap text-[#222]">
        <FileIcon name="folder" />
        {crumbs.map((c, i) => (
          <React.Fragment key={i}>
            <ChevronRight className="mx-1 size-[7px]" />
            <a href="#">{c}</a>
          </React.Fragment>
        ))}
      </nav>
    </div>
    <div className="flex min-h-0 flex-1">
      <aside className="flex w-[99px] shrink-0 flex-col gap-[5px] overflow-hidden border-r border-[#f0f0f0] pt-[11px]">
        {places.map((group, g) => (
          <div key={g}>
            {group.map((p, i) => (
              <a
                key={p.name}
                href="#"
                className={`flex h-4 items-center gap-[3px] overflow-hidden whitespace-nowrap text-[#222] ${i ? 'pl-[21px]' : 'pl-[16px]'} ${p.name === 'Audio (D:)' ? 'bg-[#d9d9d9]' : ''}`}
              >
                <FileIcon name={p.icon} />
                {p.name}
              </a>
            ))}
          </div>
        ))}
      </aside>
      <div className="flex-1 pl-3">
        <table className="w-[382px] table-fixed border-collapse whitespace-nowrap">
          <thead className="text-[#555]">
            <tr className="h-[18px]">
              <th className="w-[170px] border-r border-[#e5e5e5] p-0 pl-[2px] text-left font-normal">
                <span className="flex"><span className="w-[79px]">Name</span><ChevronUp className="-mt-1 size-[7px]" /></span>
              </th>
              <th className="w-[80px] border-r border-[#e5e5e5] p-0 pl-1 text-left font-normal">Date modified</th>
              <th className="w-[80px] border-r border-[#e5e5e5] p-0 pl-1 text-left font-normal">Type</th>
              <th className="border-r border-[#e5e5e5] p-0 pl-1 text-left font-normal">Size</th>
            </tr>
            <tr className="h-1"><td colSpan={4} className="p-0" /></tr>
          </thead>
          <tbody>
            {files.map((f, i) => (
              <tr key={f.name} className={`h-[14px] ${i === 0 ? 'outline outline-[#a8d3ea] -outline-offset-1' : ''}`}>
                <td className="p-0 pl-[2px] text-[#222]"><span className="flex items-center gap-[3px]"><FileIcon name={f.icon} />{f.name}</span></td>
                <td className="p-0 pl-[5px] text-[#666]">{f.date}</td>
                <td className="p-0 pl-[5px] text-[#666]">{f.type}</td>
                <td className="p-0 pr-[3px] text-right text-[#666]">{f.size}</td>
              </tr>
            ))}
          </tbody>
        </table>
      </div>
    </div>
    <svg viewBox="0 0 8 12" className="absolute top-[289px] left-[194px] h-3 w-2"><path d="M.5.5v10l2.300-2 1.500 3.200 1.400-.7-1.500-3H7.500z" fill="#000" stroke="#fff" strokeWidth=".4" /></svg>
  </section>
);

const taskIcons = [
  { name: 'Task View', open: false },
  { name: 'Chrome', open: true },
  { name: 'Chromium', open: false },
  { name: 'Store', open: false },
  { name: 'Remote', open: false },
  { name: 'Mixer', open: false },
  { name: 'Transfer', open: false },
  { name: 'OBS', open: true },
  { name: 'Globe', open: false },
  { name: 'Control', open: false },
  { name: 'Explorer', open: true },
  { name: 'Pro Tools', open: true },
];

const TaskIcon = ({ name }: { name: string }) => (
  <svg viewBox="0 0 18 18" className="size-4" fill="none">
    {name === 'Task View' && <path d="M4 2.500v2.500h6V2.500M4 7.500h6v4H4zM4 16v-2.500h6V16M13.500 3v12M12 6h3" stroke="#e8e8e8" strokeWidth="1.200" />}
    {name === 'Chrome' && (
      <>
        <circle cx="9" cy="9" r="8" fill="#db4437" />
        <path d="M2 5l4.500 7L9 17A8 8 0 0 1 2 5z" fill="#0f9d58" />
        <path d="M9 5h7.200A8 8 0 0 1 9 17l3.500-6z" fill="#ffcd40" />
        <circle cx="9" cy="9" r="3.800" fill="#fff" /><circle cx="9" cy="9" r="2.900" fill="#4285f4" />
      </>
    )}
    {name === 'Chromium' && (
      <>
        <circle cx="9" cy="9" r="8" fill="#4f83e0" />
        <path d="M2 5l4.500 7L9 17A8 8 0 0 1 2 5z" fill="#7ea6f0" />
        <path d="M9 5h7.200A8 8 0 0 1 9 17l3.500-6z" fill="#a3c0f6" />
        <circle cx="9" cy="9" r="3.800" fill="#dfe9fb" /><circle cx="9" cy="9" r="2.900" fill="#3f6fd0" />
      </>
    )}
    {name === 'Store' && (
      <>
        <path d="M6 5V3c0-2 6-2 6 0v2" stroke="#ddd" /><path d="M1 5h16l-1 12H2z" fill="#fff" />
        <path d="M5 7h3.500v3.500H5z" fill="#e8502a" /><path d="M9.500 7H13v3.500H9.500z" fill="#7db928" />
        <path d="M5 11.500h3.500V15H5z" fill="#1ca0e8" /><path d="M9.500 11.500H13V15H9.500z" fill="#f8b516" />
      </>
    )}
    {name === 'Remote' && (
      <>
        <path d="M3 2l12-1 1 9-11 2z" fill="#25c050" /><path d="M5 4l8-1 1 6-8 1z" fill="#5fe07c" />
        <path d="M6 13l8-1 1 4-6 1z" fill="#c9d0cc" />
      </>
    )}
    {name === 'Mixer' && (
      <>
        <path d="M1 1h16v16H1z" fill="#dcd6e4" />
        <path d="M4 3v12M7.500 3v12M11 3v12M14.500 3v12" stroke="#3f3354" strokeWidth="1.200" />
        <path d="M3 9h2M6.500 6h2M10 11h2M13.500 7h2" stroke="#3f3354" strokeWidth="2" />
      </>
    )}
    {name === 'Transfer' && (
      <>
        <circle cx="9" cy="9" r="8.500" fill="#c8203c" />
        <path d="M1 4.500L5 3l11 6-11 6-4-1.500L9 9z" fill="#fff" />
      </>
    )}
    {name === 'OBS' && (
      <>
        <circle cx="9" cy="9" r="7.800" fill="#1c1c1f" stroke="#c9c9c9" />
        <path d="M9 9c-3-1-3-4-1-5.500M9 9c2.500-2 5 0 5 2.500M9 9c1 3-2 5-4.500 4" stroke="#c9c9c9" strokeWidth="1.500" />
      </>
    )}
    {name === 'Globe' && (
      <>
        <circle cx="9" cy="9" r="8" fill="#4f9fca" />
        <path d="M9 1v16M1 9h16M3.500 3.500l11 11M14.500 3.500l-11 11" stroke="#a9d3e6" />
        <circle cx="9" cy="9" r="3.800" fill="#e8b86a" stroke="#f5e2b8" />
      </>
    )}
    {name === 'Control' && (
      <>
        <path d="M0 0h18v18H0z" fill="#0f7ad0" />
        <rect x="5" y="5" width="8" height="8" rx="2.500" stroke="#d6ecfb" strokeWidth="1.200" />
        <circle cx="9" cy="9" r="1.800" stroke="#d6ecfb" />
      </>
    )}
    {name === 'Explorer' && (
      <>
        <path d="M1 2h6l1 2h9v12H1z" fill="#f6d978" /><path d="M1 6h16v10H1z" fill="#fbe9a5" />
        <path d="M4 17v-6h10v6h-3v-3H7v3z" fill="#3fa9d8" />
      </>
    )}
    {name === 'Pro Tools' && (
      <>
        <path d="M0 0h18v18H0z" fill="#191622" />
        <path d="M4 14.500A7 7 0 1 1 14 14.500" stroke="#e3dff0" strokeWidth="1.800" />
        <path d="M3.500 15L9 6.500l5.500 8.500-3-1.500L9 10l-2.500 3.500z" fill="#b193de" />
      </>
    )}
  </svg>
);

const Taskbar = () => (
  <footer className="flex h-[27px] shrink-0 items-stretch bg-linear-to-r from-[#060606] from-45% to-[#1d1d1f] to-55% font-['Roboto',sans-serif] text-white">
    <button aria-label="Start" className="flex w-8 items-center justify-center">
      <svg viewBox="0 0 12 12" className="size-3" fill="#fff"><path d="M0 1.700l5-.7v4.700H0zM5.700.9L12 0v5.700H5.700zM0 6.300h5V11l-5-.7zM5.700 6.300H12V12l-6.300-.9z" /></svg>
    </button>
    <label className="flex w-[229px] items-center gap-[6px] bg-[#f2f2f2] px-[6px] text-[#444]">
      <i className="size-[14px] rounded-full border-2 border-[#111]" />
      <input aria-label="Search" placeholder="Type here to search" className="min-w-0 flex-1 text-[10px] placeholder:text-[#555]" />
      <Mic className="mr-[2px] size-[12px]" />
    </label>
    <div className="flex">
      {taskIcons.map((t, i) => (
        <button
          key={t.name}
          aria-label={t.name}
          className={`flex items-center justify-center border-b-2 ${i % 4 === 3 ? 'w-8' : 'w-[33px]'} ${t.open ? 'border-[#76b9ed]' : 'border-transparent'} ${t.name === 'Explorer' ? 'bg-[#3c3c3c]' : ''}`}
        >
          <TaskIcon name={t.name} />
        </button>
      ))}
    </div>
    <div className="ml-auto flex items-center gap-[15px] pr-[14px]">
      <User className="size-[11px]" />
      <ChevronUp className="size-[9px]" />
      <div className="-ml-[5px] text-center text-[8px] leading-[12px]">
        <div>8:54 AM</div>
        <div>7/30/2018</div>
      </div>
      <svg viewBox="0 0 12 12" className="size-3"><path d="M1 1h10v8H6l-2 2.500V9H1z" fill="#fff" /><path d="M3 3.500h6M3 5.500h6" stroke="#222" /></svg>
    </div>
  </footer>
);

const App = () => {
  return (
    <div className="flex h-screen flex-col overflow-hidden bg-white font-['Liberation_Sans',Arial,sans-serif]">
      <header className="shrink-0 font-['Roboto',sans-serif] text-[8px] leading-[14px] text-[#555]">
        <div className="flex h-[15px] items-center pl-[2px]">
          <AvidIcon className="size-[10px]" />
          <span className="ml-1 flex-1 text-[#888]">Pro Tools</span>
          <WindowButtons />
        </div>
        <nav className="flex h-[13px] items-center gap-[10px] pl-[5px]">
          {menus.map((m) => <button key={m}>{m}</button>)}
        </nav>
      </header>
      <main className="relative flex min-h-0 flex-1 flex-col border-t border-[#97a2ae] bg-[#cfdce9]">
        <EditTitleBar />
        <div className="mx-[6px] mb-[5px] flex min-h-0 flex-1 flex-col overflow-hidden border-b border-[#333]">
          <Toolbar />
          <Overview />
          <Rulers />
          <TrackArea />
        </div>
        <Explorer />
      </main>
      <Taskbar />
    </div>
  );
};

export default App;
